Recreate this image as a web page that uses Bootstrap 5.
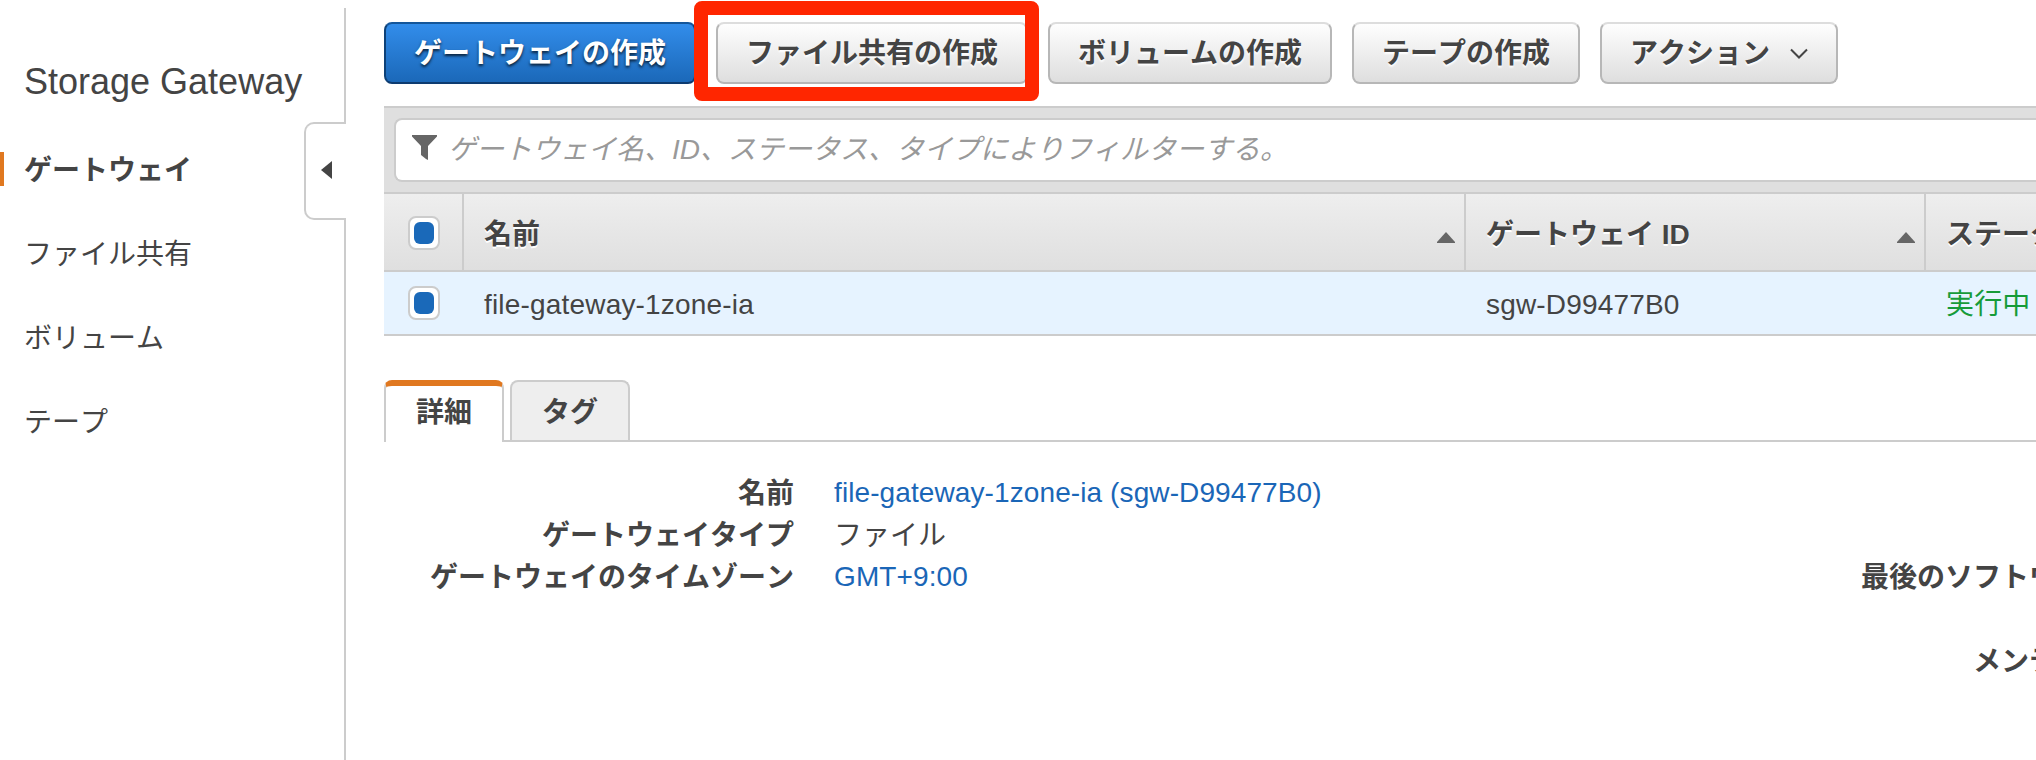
<!DOCTYPE html>
<html lang="ja">
<head>
<meta charset="utf-8">
<title>Storage Gateway</title>
<link href="https://cdn.jsdelivr.net/npm/bootstrap@5.3.0/dist/css/bootstrap.min.css" rel="stylesheet">
<style>
body{font-family:"Liberation Sans","Noto Sans CJK JP",sans-serif;font-size:28px;line-height:42px;color:#444;background:#fff;height:760px;overflow:hidden;white-space:nowrap;font-kerning:none}
.side{width:346px;padding-top:8px}
.side-panel{border-right:2px solid #ccc}
.side-title{font-size:36px;line-height:44px;padding:52px 0 0 24px;margin:0;font-weight:400;height:119px;font-kerning:auto}
.side .nav-link{color:#444;padding:0 0 0 24px;height:34px;line-height:37px;margin-bottom:50px;border:0}
.side .nav-link.active{font-weight:700;border-left:4px solid #e07820;padding-left:20px}
.side-nav{padding-top:25px}
.collapse-tab{left:304px;top:122px;width:42px;height:98px;border:2px solid #ccc;border-right:0;border-radius:10px 0 0 10px;background:#fff;padding:0 0 2px 15px}
.main-pane{padding:22px 0 0 38px;min-width:0}
.tools{gap:20px;height:84px}
.btn-aws{height:62px;padding:2px 28px 0;border:2px solid #b7b7b7;border-top-color:#ddd;border-radius:8px;font-size:28px;font-weight:700;font-kerning:none;line-height:50px;color:#444;background:linear-gradient(#fff,#ddd);background-origin:border-box;text-shadow:0 2px 2px #fff}
.btn-main{color:#fff;border-color:#14569a #0d4178 #0d3b70;background:linear-gradient(#338eec,#1a67b7);background-origin:border-box;text-shadow:0 2px 3px rgba(0,0,0,.75)}
.chev{margin:0 0 0 20px}
.focus-frame{left:-22px;top:-21px;width:345px;height:100px;border:14px solid #ff2600;border-radius:8px;z-index:2;pointer-events:none}
.filter-bar{height:88px;background:#dfdfdf;border:solid #ccc;border-width:2px 0;padding:10px 0 10px 10px}
.filter-box{height:64px;background:#fff;border:2px solid #ccc;border-right:0;border-radius:8px 0 0 8px;padding-left:16px;color:#999;font-style:italic}
.funnel{margin:-6px 11px 0 0}
.grid-row{display:grid;grid-template-columns:80px 1002px 460px 110px}
.grid-head{height:78px;background:linear-gradient(#eee,#dfdfdf);border-bottom:2px solid #ccc;font-weight:700;text-shadow:0 2px 0 #fff}
.grid-head>div{border-right:2px solid #ccc;padding:5px 9px 0 20px}
.grid-head>div:last-child{border:0;overflow:hidden}
.grid-head>.pick{padding-top:2px}
.sort{margin-top:6px}
.grid-data{height:64px;background:#e6f3ff;border-bottom:2px solid #ccc}
.grid-data>div{padding:4px 0 0 20px;letter-spacing:.18px}
.grid-row>.pick{padding-left:24px}
.grid-data>.pick{padding-top:0}
.tick{width:32px;height:34px;border:2px solid #ccc;border-radius:8px;background:#fff;padding:4px 0}
.tick i{display:block;width:20px;height:22px;border-radius:6px;background:#1a69b9;margin:0 4px}
.run-ok{color:#169b39}
.tabs{margin-top:44px;height:62px;border-bottom:2px solid #ccc;gap:6px;flex-wrap:nowrap}
.tabs .nav-link{width:120px;height:60px;padding:0;border:2px solid #ccc;border-bottom:0;border-radius:8px 8px 0 0;background:#eee;color:#444;font-weight:700;line-height:62px;text-align:center;margin:0}
.tabs .nav-link.active{height:62px;border-top:6px solid #e07820;background:#fff;color:#444;line-height:54px}
.details{display:grid;grid-template-columns:410px 1028px 214px;padding-top:31px;grid-auto-rows:42px}
.details dt,.details dd{margin:0}
.details .val{padding-left:40px}
.details a{color:#1a66b7;text-decoration:none;letter-spacing:.1px;position:relative;top:-1px}
.details .sw{padding-left:39px}
.details .maint{padding-left:151px}
</style>
</head>
<body>
<div class="d-flex h-100 overflow-hidden">
  <aside class="side position-relative flex-shrink-0">
    <div class="side-panel h-100">
      <h1 class="side-title">Storage Gateway</h1>
      <nav class="nav flex-column side-nav">
        <a class="nav-link active" href="#">ゲートウェイ</a>
        <a class="nav-link" href="#">ファイル共有</a>
        <a class="nav-link" href="#">ボリューム</a>
        <a class="nav-link" href="#">テープ</a>
      </nav>
    </div>
    <div class="collapse-tab position-absolute d-flex align-items-center">
      <svg width="11" height="18"><path d="M11 0V18L0 9Z" fill="#444"/></svg>
    </div>
  </aside>
  <main class="main-pane flex-grow-1">
    <div class="tools d-flex align-items-start">
      <button class="btn btn-aws btn-main">ゲートウェイの作成</button>
      <div class="position-relative">
        <button class="btn btn-aws d-block">ファイル共有の作成</button>
        <div class="focus-frame position-absolute"></div>
      </div>
      <button class="btn btn-aws">ボリュームの作成</button>
      <button class="btn btn-aws">テープの作成</button>
      <button class="btn btn-aws d-flex align-items-center">アクション<svg class="chev" width="18" height="14"><path d="M1 2.500L9 10.500L17 2.500" fill="none" stroke="#444" stroke-width="2"/></svg></button>
    </div>
    <div class="filter-bar">
      <div class="filter-box d-flex align-items-center">
        <svg class="funnel" width="25" height="25"><path d="M0 0H25V1.500L16 11V25L14 24L9 20V11L0 1.500Z" fill="#666"/></svg>
        <span>ゲートウェイ名、ID、ステータス、タイプによりフィルターする。</span>
      </div>
    </div>
    <div class="grid-row grid-head">
      <div class="pick d-flex align-items-center"><span class="tick"><i></i></span></div>
      <div class="d-flex align-items-center justify-content-between">名前<svg class="sort" width="18" height="11"><path d="M0 11V10L9 0L18 10V11Z" fill="#666"/></svg></div>
      <div class="d-flex align-items-center justify-content-between">ゲートウェイ ID<svg class="sort" width="18" height="11"><path d="M0 11V10L9 0L18 10V11Z" fill="#666"/></svg></div>
      <div class="d-flex align-items-center">ステータス</div>
    </div>
    <div class="grid-row grid-data align-items-center">
      <div class="pick"><span class="tick d-block"><i></i></span></div>
      <div>file-gateway-1zone-ia</div>
      <div>sgw-D99477B0</div>
      <div class="run-ok">実行中</div>
    </div>
    <div class="nav tabs">
      <a class="nav-link active" href="#">詳細</a>
      <a class="nav-link" href="#">タグ</a>
    </div>
    <dl class="details m-0">
      <dt class="text-end">名前</dt>
      <dd class="val"><a href="#">file-gateway-1zone-ia (sgw-D99477B0)</a></dd>
      <dt></dt>
      <dt class="text-end">ゲートウェイタイプ</dt>
      <dd class="val">ファイル</dd>
      <dt></dt>
      <dt class="text-end">ゲートウェイのタイムゾーン</dt>
      <dd class="val"><a href="#">GMT+9:00</a></dd>
      <dt class="sw">最後のソフトウェア</dt>
      <dt></dt><dd></dd><dt></dt>
      <dt></dt><dd></dd><dt class="maint">メンテナンス</dt>
    </dl>
  </main>
</div>
<script src="https://cdn.jsdelivr.net/npm/bootstrap@5.3.0/dist/js/bootstrap.bundle.min.js"></script>
</body>
</html>
